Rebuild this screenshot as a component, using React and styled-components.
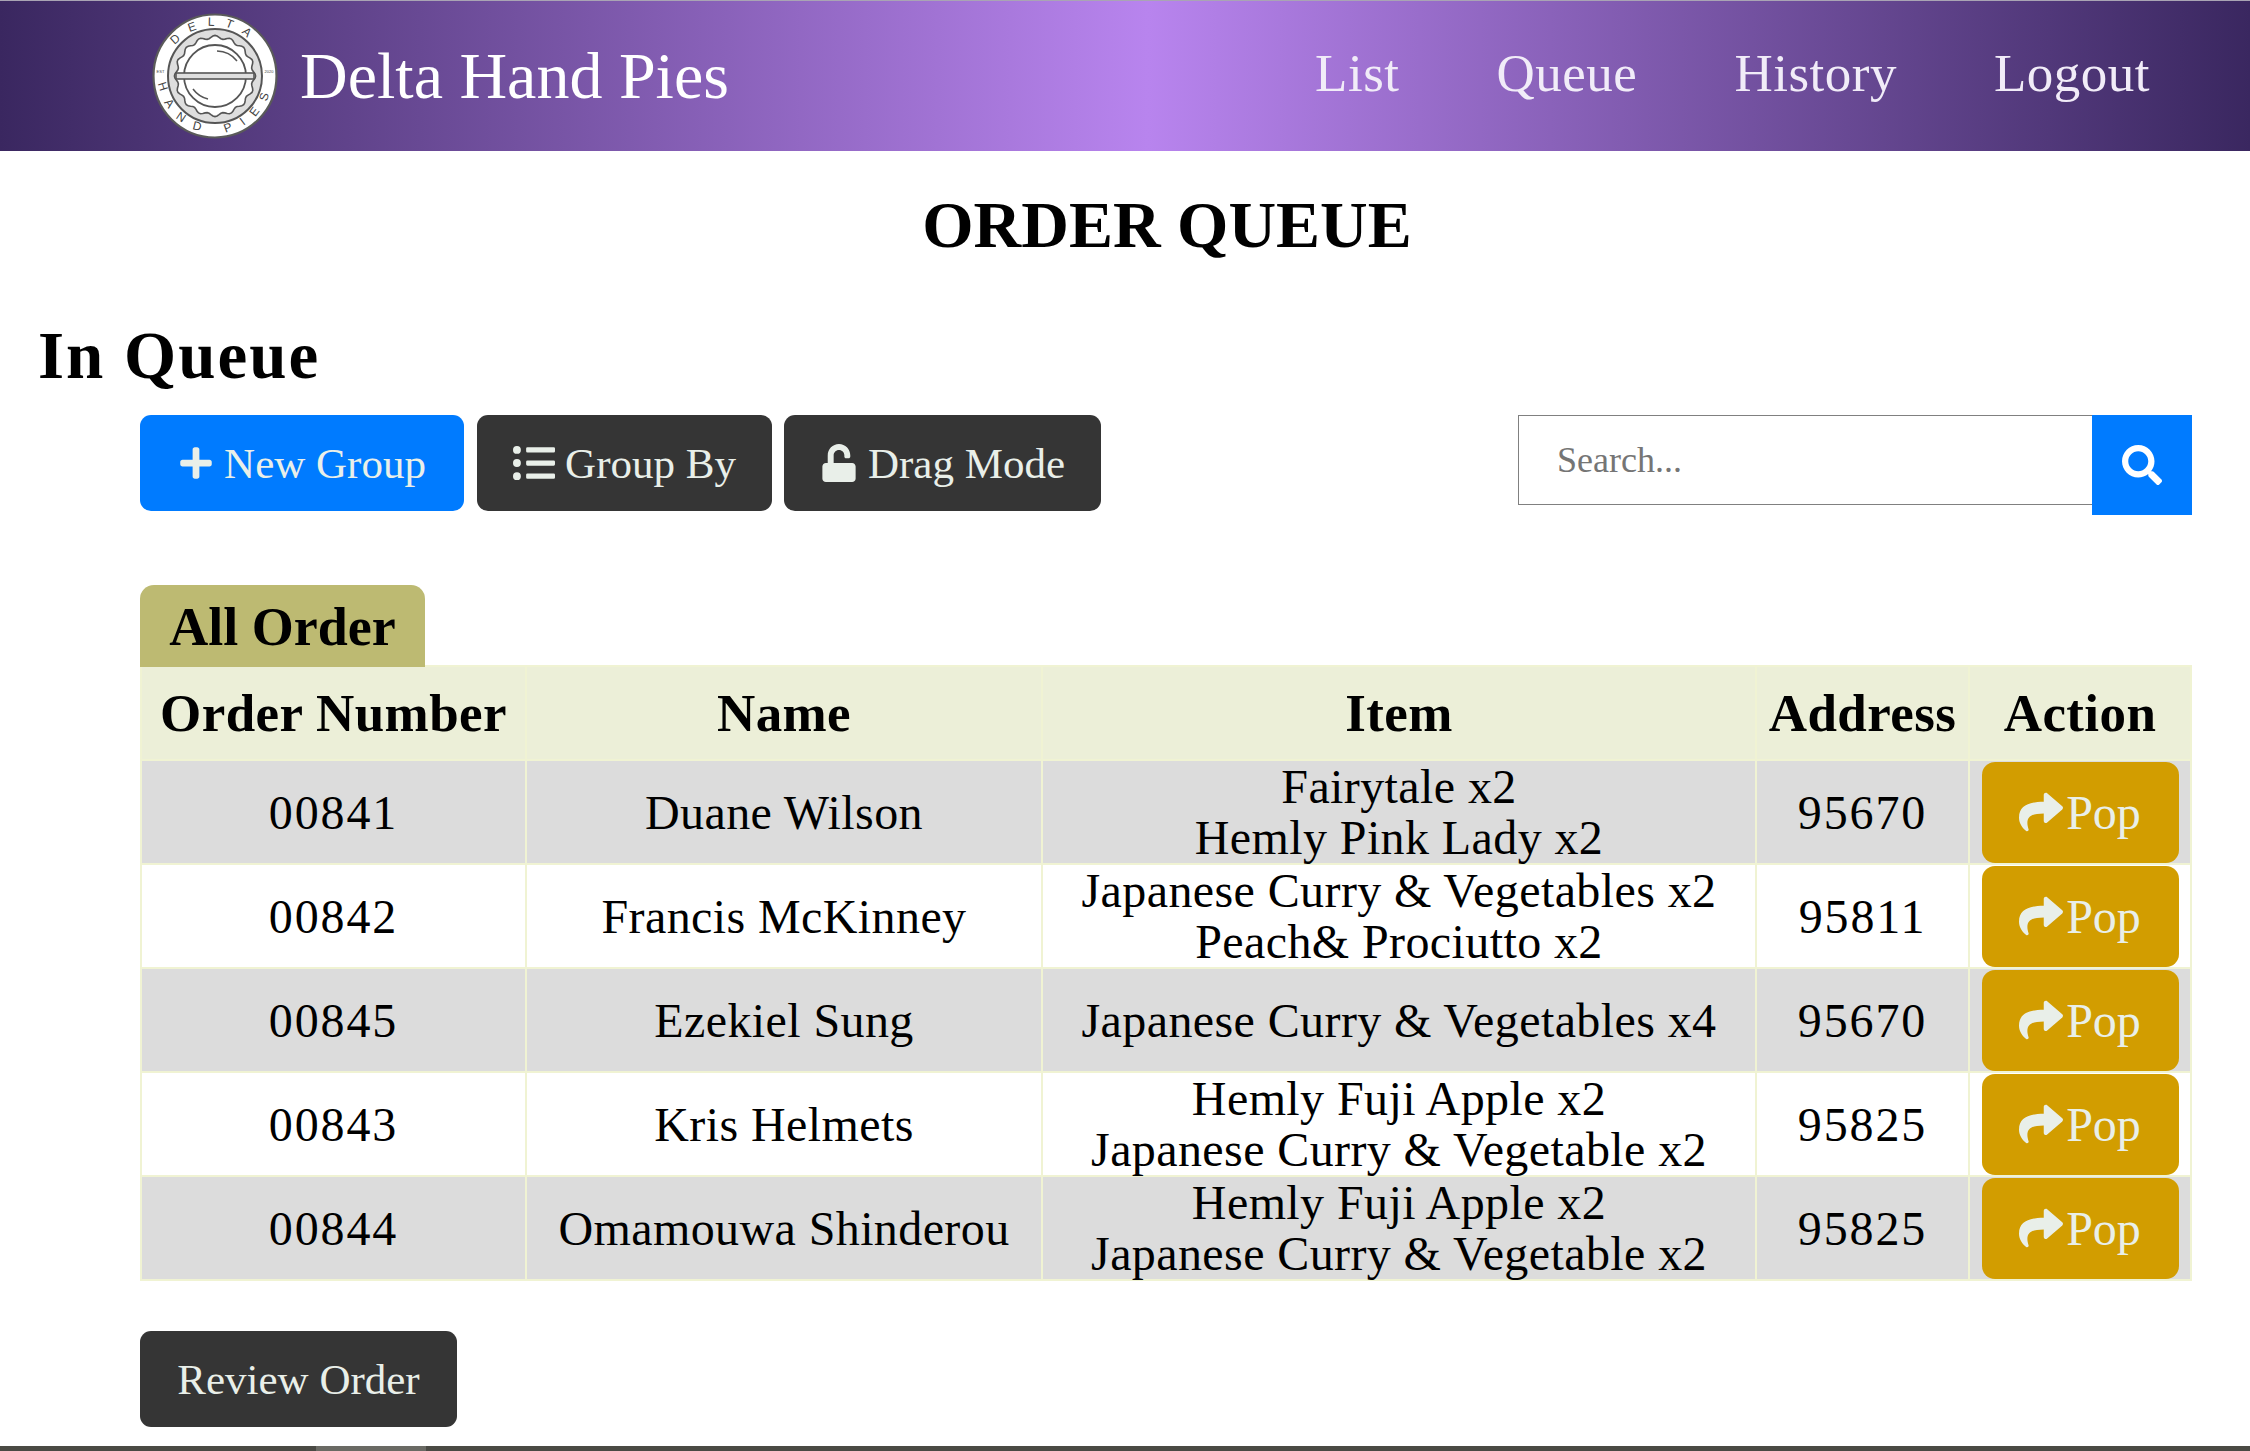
import React from "react";
import styled, { createGlobalStyle } from "styled-components";
import { FaPlus, FaListUl, FaUnlock, FaSearch, FaShare } from "react-icons/fa";

const serif = `"Liberation Serif", "Times New Roman", serif`;

const Global = createGlobalStyle`
  html, body { margin: 0; padding: 0; background: #fff; }
  body { font-family: ${serif}; color: #000; overflow: hidden; }
`;

const Page = styled.div`
  width: 2250px;
  height: 1451px;
  display: flex;
  flex-direction: column;
  overflow: hidden;
`;

const Header = styled.header`
  height: 150px;
  flex: none;
  border-top: 1px solid #a9a4b4;
  display: flex;
  align-items: center;
  padding: 0 100px 0 151px;
  background: linear-gradient(90deg, #3a2760 0%, #b884ee 51%, #3a2760 100%);
`;

const Brand = styled.div`
  display: flex;
  align-items: center;
  gap: 21px;
  flex: 1;
  color: #fff;
  font-size: 66px;
`;

const Nav = styled.nav`
  display: flex;
  gap: 97px;
  font-size: 53px;
  letter-spacing: 0.5px;
  color: #f1ecf8;
  padding-bottom: 7px;
`;

const Main = styled.main`
  flex: 1;
  min-height: 0;
  padding: 0 58px 0 38px;
  display: flex;
  flex-direction: column;
`;

const Title = styled.h1`
  margin: 39px 0 0;
  padding-left: 104px;
  text-align: center;
  font-size: 66px;
  line-height: 70px;
  font-weight: 700;
`;

const SubTitle = styled.h2`
  margin: 59px 0 0;
  font-size: 67px;
  line-height: 72px;
  letter-spacing: 2px;
  font-weight: 700;
`;

const Content = styled.section`
  margin: 24px 0 0 102px;
  display: flex;
  flex-direction: column;
`;

const Toolbar = styled.div`
  display: flex;
  align-items: flex-start;
  gap: 12px;
`;

const Button = styled.button`
  height: 96px;
  width: ${(p) => p.$w}px;
  margin-left: ${(p) => p.$offset || 0}px;
  border: 0;
  border-radius: 11px;
  padding: 0;
  display: flex;
  align-items: center;
  justify-content: center;
  gap: 10px;
  color: #e9efe9;
  background: ${(p) => p.$bg || "#353535"};
  font-family: ${serif};
  font-size: 43px;
`;

const SearchBox = styled.form`
  margin-left: auto;
  display: flex;
  align-items: flex-start;
`;

const SearchInput = styled.input`
  box-sizing: border-box;
  width: 574px;
  height: 90px;
  border: 1px solid #808080;
  border-right: 0;
  padding: 0 38px;
  font-family: ${serif};
  font-size: 36px;
  outline: none;
  &::placeholder { color: #757575; opacity: 1; }
`;

const SearchButton = styled.button`
  width: 100px;
  height: 100px;
  border: 0;
  padding: 0;
  display: flex;
  align-items: center;
  justify-content: center;
  background: #007bff;
  color: #fff;
  font-size: 40px;
`;

const Tab = styled.div`
  margin-top: 70px;
  width: 285px;
  height: 82px;
  box-sizing: border-box;
  padding-top: 2px;
  border-radius: 14px 14px 0 0;
  background: #bdba72;
  display: flex;
  align-items: center;
  justify-content: center;
  font-size: 54px;
  font-weight: 700;
  position: relative;
  z-index: 1;
  margin-bottom: -2px;
`;

const Table = styled.table`
  width: 2050px;
  table-layout: fixed;
  border-collapse: collapse;
  font-size: 48px;
  text-align: center;
`;

const Th = styled.th`
  height: 92px;
  padding: 0;
  background: #ecefd8;
  border: 2px solid #f0f3d3;
  font-size: 53px;
  letter-spacing: 0.4px;
  font-weight: 700;
`;

const Tr = styled.tr`
  background: ${(p) => (p.$shade ? "#dcdcdc" : "#fff")};
`;

const Td = styled.td`
  height: 102px;
  padding: 0;
  border: 2px solid #f0f3d3;
  line-height: 51px;
  letter-spacing: ${(p) => (p.$digits ? "1.9px" : "0.4px")};
`;

const PopButton = styled.button`
  width: 197px;
  height: 101px;
  margin: 0 auto;
  border: 0;
  border-radius: 13px;
  padding: 0;
  display: flex;
  align-items: center;
  justify-content: center;
  gap: 3px;
  background: #d29d00;
  color: #e9efe9;
  font-family: ${serif};
  font-size: 48px;
  vertical-align: middle;
`;

const ReviewRow = styled.div`
  margin-top: 50px;
`;

const BottomStrip = styled.div`
  height: 5px;
  flex: none;
  background: #4a4a44;
  padding-left: 316px;
`;

const StripThumb = styled.div`
  width: 110px;
  height: 100%;
  background: #6a6a64;
`;

const wave = (() => {
  const pts = [];
  for (let i = 0; i <= 360; i += 3) {
    const a = (i * Math.PI) / 180;
    const r = 39 + 1.6 * Math.cos(a * 16);
    pts.push(`${(64 + r * Math.cos(a)).toFixed(2)},${(64 + r * Math.sin(a)).toFixed(2)}`);
  }
  return pts.join(" ");
})();

const LogoText = styled.text`
  font-family: "Liberation Sans", sans-serif;
  font-size: ${(p) => p.$size}px;
  fill: #444;
  letter-spacing: ${(p) => p.$spacing}px;
  text-anchor: middle;
`;

const Logo = () => (
  <svg width="128" height="128" viewBox="0 0 128 128">
    <defs>
      <path id="arcTop" d="M 14 64 A 50 50 0 0 1 114 64" />
      <path id="arcBottom" d="M 10.4 44.5 A 57 57 0 1 0 117.6 44.5" />
    </defs>
    <circle cx="64" cy="64" r="61.5" fill="#fff" stroke="#5a5a5a" strokeWidth="2.2" />
    <circle cx="64" cy="64" r="47" fill="#dedede" stroke="#555" strokeWidth="2" />
    <polygon points={wave} fill="#fff" stroke="#555" strokeWidth="1.6" />
    <circle cx="64" cy="64" r="31" fill="#fff" stroke="#555" strokeWidth="1.8" />
    <rect x="25" y="61" width="78" height="6" fill="#dedede" stroke="#555" strokeWidth="1.6" />
    <path d="M 66 39 A 26 26 0 0 1 86 49" fill="none" stroke="#555" strokeWidth="1.5" />
    <path d="M 42 77 A 26 26 0 0 0 57 87" fill="none" stroke="#555" strokeWidth="1.5" />
    <LogoText $size={12} $spacing={11}>
      <textPath href="#arcTop" startOffset="50%">DELTA</textPath>
    </LogoText>
    <LogoText $size={12} $spacing={11}>
      <textPath href="#arcBottom" startOffset="50%">HAND PIES</textPath>
    </LogoText>
    <LogoText $size={4} $spacing={0} x="9.5" y="61">EST</LogoText>
    <LogoText $size={4} $spacing={0} x="118" y="61">2020</LogoText>
  </svg>
);

const rows = [
  ["00841", "Duane Wilson", ["Fairytale x2", "Hemly Pink Lady x2"], "95670"],
  ["00842", "Francis McKinney", ["Japanese Curry & Vegetables x2", "Peach& Prociutto x2"], "95811"],
  ["00845", "Ezekiel Sung", ["Japanese Curry & Vegetables x4"], "95670"],
  ["00843", "Kris Helmets", ["Hemly Fuji Apple x2", "Japanese Curry & Vegetable x2"], "95825"],
  ["00844", "Omamouwa Shinderou", ["Hemly Fuji Apple x2", "Japanese Curry & Vegetable x2"], "95825"],
];

export default function App() {
  return (
    <Page>
      <Global />
      <Header>
        <Brand>
          <Logo />
          Delta Hand Pies
        </Brand>
        <Nav>
          <span>List</span>
          <span>Queue</span>
          <span>History</span>
          <span>Logout</span>
        </Nav>
      </Header>
      <Main>
        <Title>ORDER QUEUE</Title>
        <SubTitle>In Queue</SubTitle>
        <Content>
          <Toolbar>
            <Button $bg="#007bff" $w={324}><FaPlus size={36} />New Group</Button>
            <Button $w={295} $offset={1}><FaListUl size={42} />Group By</Button>
            <Button $w={317}><FaUnlock size={38} />Drag Mode</Button>
            <SearchBox>
              <SearchInput placeholder="Search..." />
              <SearchButton type="button"><FaSearch /></SearchButton>
            </SearchBox>
          </Toolbar>
          <Tab>All Order</Tab>
          <Table>
            <colgroup>
              <col width="385" />
              <col width="516" />
              <col width="714" />
              <col width="213" />
              <col width="222" />
            </colgroup>
            <thead>
              <tr>
                <Th>Order Number</Th>
                <Th>Name</Th>
                <Th>Item</Th>
                <Th>Address</Th>
                <Th>Action</Th>
              </tr>
            </thead>
            <tbody>
              {rows.map((r, i) => (
                <Tr key={r[0]} $shade={i % 2 === 0}>
                  <Td $digits>{r[0]}</Td>
                  <Td>{r[1]}</Td>
                  <Td>{r[2].map((l) => <div key={l}>{l}</div>)}</Td>
                  <Td $digits>{r[3]}</Td>
                  <Td><PopButton><FaShare size={44} />Pop</PopButton></Td>
                </Tr>
              ))}
            </tbody>
          </Table>
          <ReviewRow>
            <Button $w={317}>Review Order</Button>
          </ReviewRow>
        </Content>
      </Main>
      <BottomStrip><StripThumb /></BottomStrip>
    </Page>
  );
}
